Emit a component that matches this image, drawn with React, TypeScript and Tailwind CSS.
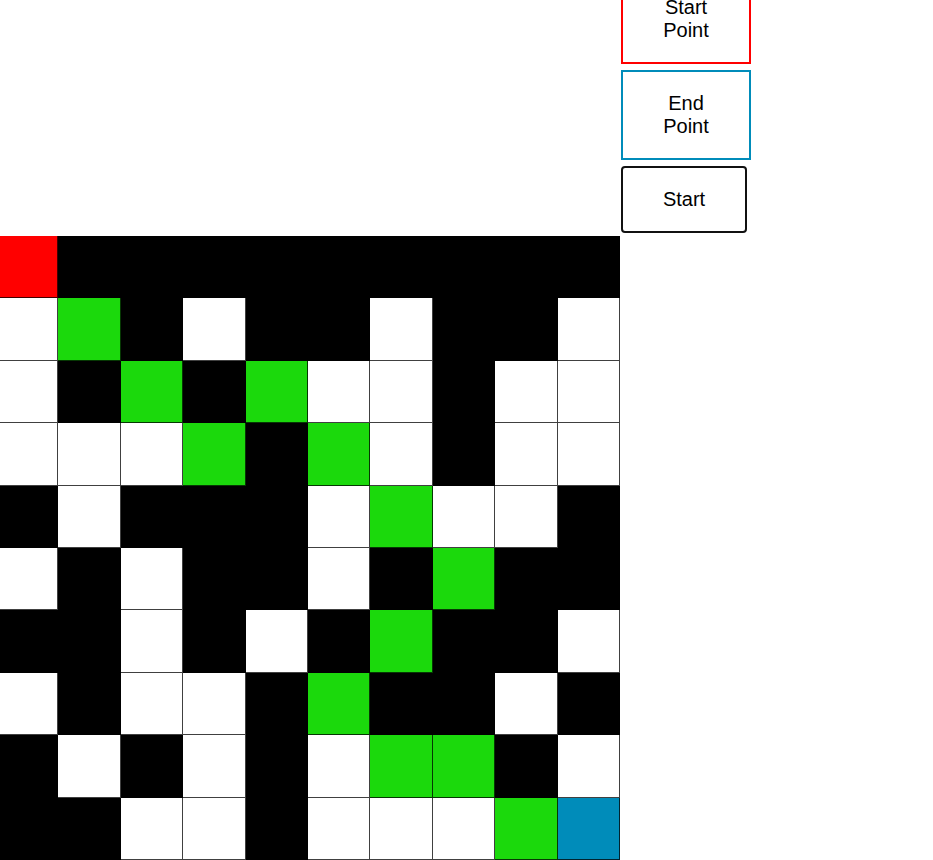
import React from 'react';

// R = start, E = end, G = path, B = wall, W = open
const MAZE = [
  'RBBBBBBBBB',
  'WGBWBBWBBW',
  'WBGBGWWBWW',
  'WWWGBGWBWW',
  'BWBBBWGWWB',
  'WBWBBWBGBB',
  'BBWBWBGBBW',
  'WBWWBGBBWB',
  'BWBWBWGGBW',
  'BBWWBWWWGE',
];

const cellColor: Record<string, string> = {
  R: 'bg-[#ff0000]',
  E: 'bg-[#008cba]',
  G: 'bg-[#1bd90c]',
  B: 'bg-black',
  W: 'bg-white',
};

const App: React.FC = () => {
  return (
    <div className="w-[933px] h-[860px] overflow-hidden bg-white font-['Liberation_Sans',Arial,sans-serif] text-[20px] leading-[23px] text-black">
      <div className="flex items-start gap-px -mt-[26px] -ml-[4px]">
        {/* Maze grid */}
        <div className="mt-[262px] grid grid-cols-10 grid-rows-10 w-[624px] h-[624px] shrink-0">
          {MAZE.flatMap((row, r) =>
            row.split('').map((c, i) => (
              <div
                key={`${r}-${i}`}
                className={`${cellColor[c]} border-r border-b border-[rgba(0,0,0,0.75)]`}
              />
            ))
          )}
        </div>

        {/* Controls */}
        <div className="flex flex-col items-start gap-[6px] shrink-0">
          <button className="w-[130px] h-[90px] border-2 border-[#ff0000] bg-white flex items-center justify-center text-center px-5">
            Start
            <br />
            Point
          </button>
          <button className="w-[130px] h-[90px] border-2 border-[#008cba] bg-white flex items-center justify-center text-center px-5">
            End
            <br />
            Point
          </button>
          <button className="w-[126px] h-[67px] border-2 border-[#111] rounded-[4px] bg-white flex items-center justify-center">
            Start
          </button>
        </div>
      </div>
    </div>
  );
};

export default App;
